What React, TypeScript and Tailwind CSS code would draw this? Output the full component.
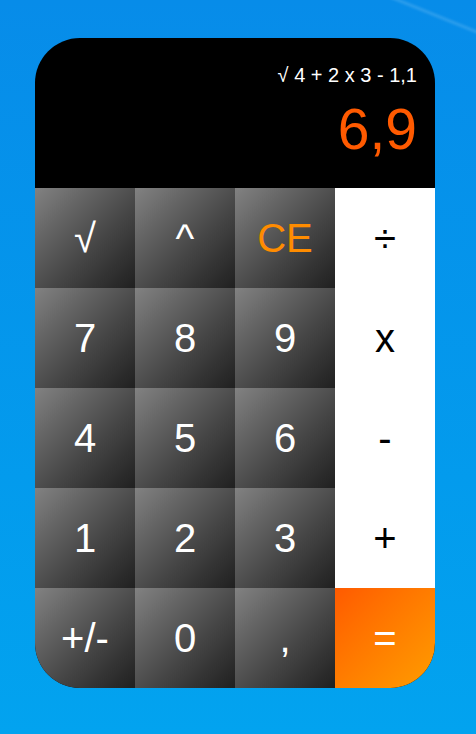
import React from 'react'

type Key = { label: string; kind: 'num' | 'op' | 'ce' | 'eq' }

const keys: Key[] = [
  { label: '√', kind: 'num' },
  { label: '^', kind: 'num' },
  { label: 'CE', kind: 'ce' },
  { label: '÷', kind: 'op' },
  { label: '7', kind: 'num' },
  { label: '8', kind: 'num' },
  { label: '9', kind: 'num' },
  { label: 'x', kind: 'op' },
  { label: '4', kind: 'num' },
  { label: '5', kind: 'num' },
  { label: '6', kind: 'num' },
  { label: '-', kind: 'op' },
  { label: '1', kind: 'num' },
  { label: '2', kind: 'num' },
  { label: '3', kind: 'num' },
  { label: '+', kind: 'op' },
  { label: '+/-', kind: 'num' },
  { label: '0', kind: 'num' },
  { label: ',', kind: 'num' },
  { label: '=', kind: 'eq' },
]

const styles = {
  num: 'bg-gradient-to-br from-[#828282] to-[#202020] text-white',
  ce: 'bg-gradient-to-br from-[#828282] to-[#202020] text-[#ff8c00]',
  op: 'bg-white text-black',
  eq: 'bg-gradient-to-br from-[#ff5a00] to-[#ff9c00] text-white',
}

const App = () => {
  return (
    <div className="relative w-[476px] h-[734px] overflow-hidden bg-gradient-to-b from-[#078ce9] to-[#02a3ef] font-['Liberation_Sans',Arial,sans-serif]">
      {/* light streak of the desktop wallpaper */}
      <div className="absolute top-[16px] right-[-40px] w-[150px] h-[3px] rotate-[22deg] bg-white/15 blur-[1px]" />
      <div className="relative ml-[35px] pt-[38px]">
        <div className="w-[400px] rounded-[45px] overflow-hidden bg-black">
          <div className="h-[150px] pt-[25px] pr-[18px] flex flex-col items-end">
            <div className="text-white text-[20px] leading-[24px]">√ 4 + 2 x 3 - 1,1</div>
            <div className="mt-[14px] text-[#ff5a00] text-[57px] leading-[57px]">6,9</div>
          </div>
          <div className="grid grid-cols-4">
            {keys.map((k) => (
              <div
                key={k.label}
                className={`h-[100px] flex items-center justify-center text-[40px] leading-none ${styles[k.kind]}`}
              >
                {k.label}
              </div>
            ))}
          </div>
        </div>
      </div>
    </div>
  )
}

export default App
